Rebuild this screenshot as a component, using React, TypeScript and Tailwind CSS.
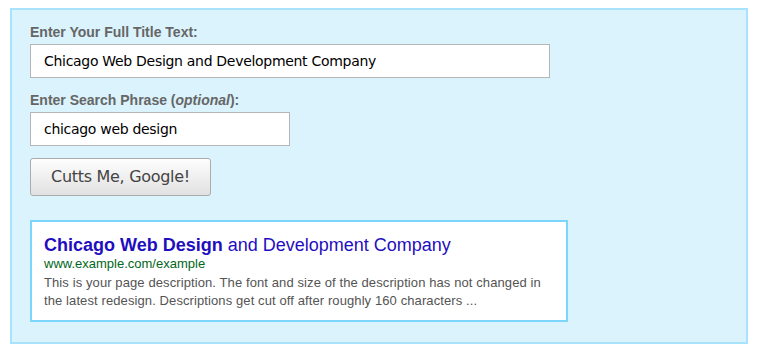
const App = () => {
  const title = "Chicago Web Design and Development Company";
  const phrase = "chicago web design";

  return (
    <div className="min-h-[355px] bg-white pt-2 pl-[10px]">
      <div className="h-[336px] w-[738px] border-2 border-[#a9e3fb] bg-[#daf3fd] pt-[14px] pl-[18px]">
        {/* Title input */}
        <label className="block font-['Liberation_Sans',Arial,sans-serif] text-[14px] leading-4 font-bold text-[#666]">
          Enter Your Full Title Text:
        </label>
        <input
          readOnly
          value={title}
          className="mt-1 block h-[34px] w-[520px] border border-[#b5b5b5] bg-white px-[13px] font-['DejaVu_Sans',sans-serif] text-[14px] tracking-[-0.3px] text-black outline-none"
        />

        {/* Search phrase */}
        <label className="mt-[14px] block font-['Liberation_Sans',Arial,sans-serif] text-[14px] leading-4 font-bold text-[#666]">
          Enter Search Phrase (<em>optional</em>):
        </label>
        <input
          readOnly
          value={phrase}
          className="mt-1 block h-[34px] w-[260px] border border-[#b5b5b5] bg-white px-[13px] font-['DejaVu_Sans',sans-serif] text-[14px] tracking-[-0.3px] text-black outline-none"
        />

        <button className="mt-3 flex h-[38px] w-[181px] items-center justify-center rounded-[3px] border border-[#ababab] bg-gradient-to-b from-[#fefefe] to-[#e1e1e1] font-['DejaVu_Sans',sans-serif] text-[16px] tracking-[-0.3px] text-[#444]">
          Cutts Me, Google!
        </button>

        {/* Preview */}
        <div className="mt-6 h-[102px] w-[538px] border-2 border-[#7cd5fb] bg-white px-3 pt-3 font-['Liberation_Sans',Arial,sans-serif]">
          <div className="text-[18px] leading-[22px] text-[#1f0ebf]">
            <span className="font-bold">Chicago Web Design</span> and Development Company
          </div>
          <div className="text-[13px] leading-4 text-[#006621]">www.example.com/example</div>
          <p className="mt-[2px] text-[13px] leading-[18px] tracking-[0.1px] text-[#545454]">
            This is your page description. The font and size of the description has not changed in
            <br />
            the latest redesign. Descriptions get cut off after roughly 160 characters ...
          </p>
        </div>
      </div>
    </div>
  );
};

export default App;
